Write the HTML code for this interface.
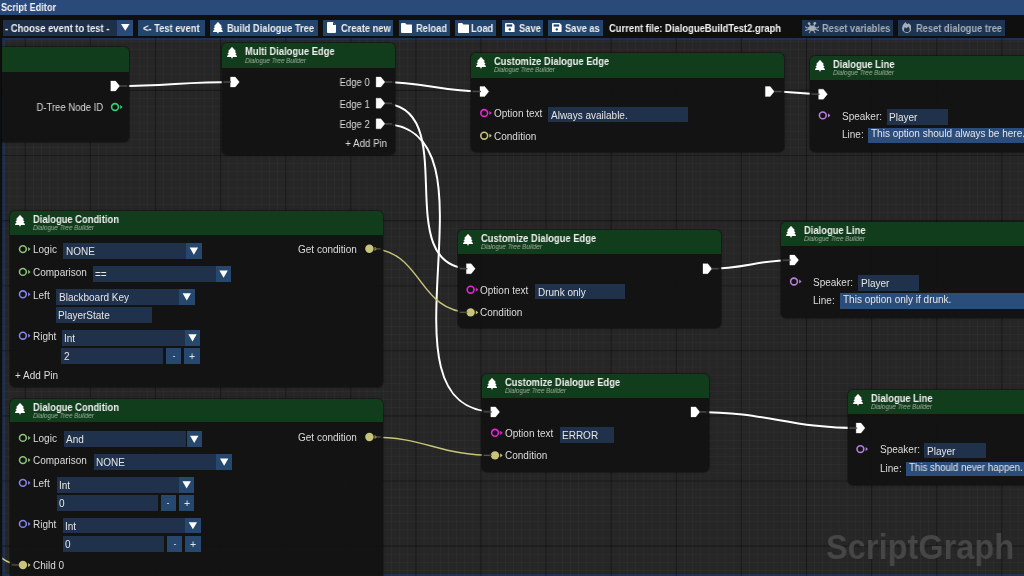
<!DOCTYPE html><html><head><meta charset="utf-8"><style>
html,body{margin:0;padding:0;}
body{width:1024px;height:576px;overflow:hidden;position:relative;background:#0f0f0f;font-family:"Liberation Sans", sans-serif;}
#title{position:absolute;left:0;top:0;width:1024px;height:15px;background:#294a7a;}
#canvas{position:absolute;left:2px;top:38px;width:1022px;height:538px;background-color:#262626;overflow:hidden;}
#border{position:absolute;left:2px;top:38px;width:1022px;height:538px;box-sizing:border-box;border:2.5px solid #233c63;border-right:none;pointer-events:none;}
svg{position:absolute;}
</style></head><body>

<div id="title"></div>
<svg style="left:0;top:0" width="1024" height="576"><defs><clipPath id="cc"><rect x="2.3" y="38" width="1022" height="538"/></clipPath></defs><rect x="2.3" y="38" width="1022" height="538" fill="#1e3150"/><rect x="5" y="40.3" width="1019" height="533.7" fill="#262626"/><g clip-path="url(#cc)"><line x1="-7.25" y1="0" x2="-7.25" y2="576" stroke="rgba(255,255,255,0.028)" stroke-width="1"/><line x1="0.89" y1="0" x2="0.89" y2="576" stroke="rgba(255,255,255,0.028)" stroke-width="1"/><line x1="9.02" y1="0" x2="9.02" y2="576" stroke="rgba(255,255,255,0.028)" stroke-width="1"/><line x1="17.16" y1="0" x2="17.16" y2="576" stroke="rgba(255,255,255,0.028)" stroke-width="1"/><line x1="25.30" y1="0" x2="25.30" y2="576" stroke="rgba(255,255,255,0.028)" stroke-width="1"/><line x1="33.44" y1="0" x2="33.44" y2="576" stroke="rgba(255,255,255,0.028)" stroke-width="1"/><line x1="41.58" y1="0" x2="41.58" y2="576" stroke="rgba(255,255,255,0.028)" stroke-width="1"/><line x1="49.71" y1="0" x2="49.71" y2="576" stroke="rgba(255,255,255,0.028)" stroke-width="1"/><line x1="57.85" y1="0" x2="57.85" y2="576" stroke="rgba(255,255,255,0.028)" stroke-width="1"/><line x1="65.99" y1="0" x2="65.99" y2="576" stroke="rgba(255,255,255,0.028)" stroke-width="1"/><line x1="74.13" y1="0" x2="74.13" y2="576" stroke="rgba(255,255,255,0.028)" stroke-width="1"/><line x1="82.26" y1="0" x2="82.26" y2="576" stroke="rgba(255,255,255,0.028)" stroke-width="1"/><line x1="90.40" y1="0" x2="90.40" y2="576" stroke="rgba(255,255,255,0.028)" stroke-width="1"/><line x1="98.54" y1="0" x2="98.54" y2="576" stroke="rgba(255,255,255,0.028)" stroke-width="1"/><line x1="106.68" y1="0" x2="106.68" y2="576" stroke="rgba(255,255,255,0.028)" stroke-width="1"/><line x1="114.81" y1="0" x2="114.81" y2="576" stroke="rgba(255,255,255,0.028)" stroke-width="1"/><line x1="122.95" y1="0" x2="122.95" y2="576" stroke="rgba(255,255,255,0.028)" stroke-width="1"/><line x1="131.09" y1="0" x2="131.09" y2="576" stroke="rgba(255,255,255,0.028)" stroke-width="1"/><line x1="139.23" y1="0" x2="139.23" y2="576" stroke="rgba(255,255,255,0.028)" stroke-width="1"/><line x1="147.36" y1="0" x2="147.36" y2="576" stroke="rgba(255,255,255,0.028)" stroke-width="1"/><line x1="155.50" y1="0" x2="155.50" y2="576" stroke="rgba(255,255,255,0.028)" stroke-width="1"/><line x1="163.64" y1="0" x2="163.64" y2="576" stroke="rgba(255,255,255,0.028)" stroke-width="1"/><line x1="171.77" y1="0" x2="171.77" y2="576" stroke="rgba(255,255,255,0.028)" stroke-width="1"/><line x1="179.91" y1="0" x2="179.91" y2="576" stroke="rgba(255,255,255,0.028)" stroke-width="1"/><line x1="188.05" y1="0" x2="188.05" y2="576" stroke="rgba(255,255,255,0.028)" stroke-width="1"/><line x1="196.19" y1="0" x2="196.19" y2="576" stroke="rgba(255,255,255,0.028)" stroke-width="1"/><line x1="204.32" y1="0" x2="204.32" y2="576" stroke="rgba(255,255,255,0.028)" stroke-width="1"/><line x1="212.46" y1="0" x2="212.46" y2="576" stroke="rgba(255,255,255,0.028)" stroke-width="1"/><line x1="220.60" y1="0" x2="220.60" y2="576" stroke="rgba(255,255,255,0.028)" stroke-width="1"/><line x1="228.74" y1="0" x2="228.74" y2="576" stroke="rgba(255,255,255,0.028)" stroke-width="1"/><line x1="236.87" y1="0" x2="236.87" y2="576" stroke="rgba(255,255,255,0.028)" stroke-width="1"/><line x1="245.01" y1="0" x2="245.01" y2="576" stroke="rgba(255,255,255,0.028)" stroke-width="1"/><line x1="253.15" y1="0" x2="253.15" y2="576" stroke="rgba(255,255,255,0.028)" stroke-width="1"/><line x1="261.29" y1="0" x2="261.29" y2="576" stroke="rgba(255,255,255,0.028)" stroke-width="1"/><line x1="269.42" y1="0" x2="269.42" y2="576" stroke="rgba(255,255,255,0.028)" stroke-width="1"/><line x1="277.56" y1="0" x2="277.56" y2="576" stroke="rgba(255,255,255,0.028)" stroke-width="1"/><line x1="285.70" y1="0" x2="285.70" y2="576" stroke="rgba(255,255,255,0.028)" stroke-width="1"/><line x1="293.84" y1="0" x2="293.84" y2="576" stroke="rgba(255,255,255,0.028)" stroke-width="1"/><line x1="301.97" y1="0" x2="301.97" y2="576" stroke="rgba(255,255,255,0.028)" stroke-width="1"/><line x1="310.11" y1="0" x2="310.11" y2="576" stroke="rgba(255,255,255,0.028)" stroke-width="1"/><line x1="318.25" y1="0" x2="318.25" y2="576" stroke="rgba(255,255,255,0.028)" stroke-width="1"/><line x1="326.39" y1="0" x2="326.39" y2="576" stroke="rgba(255,255,255,0.028)" stroke-width="1"/><line x1="334.52" y1="0" x2="334.52" y2="576" stroke="rgba(255,255,255,0.028)" stroke-width="1"/><line x1="342.66" y1="0" x2="342.66" y2="576" stroke="rgba(255,255,255,0.028)" stroke-width="1"/><line x1="350.80" y1="0" x2="350.80" y2="576" stroke="rgba(255,255,255,0.028)" stroke-width="1"/><line x1="358.94" y1="0" x2="358.94" y2="576" stroke="rgba(255,255,255,0.028)" stroke-width="1"/><line x1="367.07" y1="0" x2="367.07" y2="576" stroke="rgba(255,255,255,0.028)" stroke-width="1"/><line x1="375.21" y1="0" x2="375.21" y2="576" stroke="rgba(255,255,255,0.028)" stroke-width="1"/><line x1="383.35" y1="0" x2="383.35" y2="576" stroke="rgba(255,255,255,0.028)" stroke-width="1"/><line x1="391.49" y1="0" x2="391.49" y2="576" stroke="rgba(255,255,255,0.028)" stroke-width="1"/><line x1="399.62" y1="0" x2="399.62" y2="576" stroke="rgba(255,255,255,0.028)" stroke-width="1"/><line x1="407.76" y1="0" x2="407.76" y2="576" stroke="rgba(255,255,255,0.028)" stroke-width="1"/><line x1="415.90" y1="0" x2="415.90" y2="576" stroke="rgba(255,255,255,0.028)" stroke-width="1"/><line x1="424.04" y1="0" x2="424.04" y2="576" stroke="rgba(255,255,255,0.028)" stroke-width="1"/><line x1="432.17" y1="0" x2="432.17" y2="576" stroke="rgba(255,255,255,0.028)" stroke-width="1"/><line x1="440.31" y1="0" x2="440.31" y2="576" stroke="rgba(255,255,255,0.028)" stroke-width="1"/><line x1="448.45" y1="0" x2="448.45" y2="576" stroke="rgba(255,255,255,0.028)" stroke-width="1"/><line x1="456.59" y1="0" x2="456.59" y2="576" stroke="rgba(255,255,255,0.028)" stroke-width="1"/><line x1="464.72" y1="0" x2="464.72" y2="576" stroke="rgba(255,255,255,0.028)" stroke-width="1"/><line x1="472.86" y1="0" x2="472.86" y2="576" stroke="rgba(255,255,255,0.028)" stroke-width="1"/><line x1="481.00" y1="0" x2="481.00" y2="576" stroke="rgba(255,255,255,0.028)" stroke-width="1"/><line x1="489.14" y1="0" x2="489.14" y2="576" stroke="rgba(255,255,255,0.028)" stroke-width="1"/><line x1="497.27" y1="0" x2="497.27" y2="576" stroke="rgba(255,255,255,0.028)" stroke-width="1"/><line x1="505.41" y1="0" x2="505.41" y2="576" stroke="rgba(255,255,255,0.028)" stroke-width="1"/><line x1="513.55" y1="0" x2="513.55" y2="576" stroke="rgba(255,255,255,0.028)" stroke-width="1"/><line x1="521.69" y1="0" x2="521.69" y2="576" stroke="rgba(255,255,255,0.028)" stroke-width="1"/><line x1="529.82" y1="0" x2="529.82" y2="576" stroke="rgba(255,255,255,0.028)" stroke-width="1"/><line x1="537.96" y1="0" x2="537.96" y2="576" stroke="rgba(255,255,255,0.028)" stroke-width="1"/><line x1="546.10" y1="0" x2="546.10" y2="576" stroke="rgba(255,255,255,0.028)" stroke-width="1"/><line x1="554.24" y1="0" x2="554.24" y2="576" stroke="rgba(255,255,255,0.028)" stroke-width="1"/><line x1="562.37" y1="0" x2="562.37" y2="576" stroke="rgba(255,255,255,0.028)" stroke-width="1"/><line x1="570.51" y1="0" x2="570.51" y2="576" stroke="rgba(255,255,255,0.028)" stroke-width="1"/><line x1="578.65" y1="0" x2="578.65" y2="576" stroke="rgba(255,255,255,0.028)" stroke-width="1"/><line x1="586.79" y1="0" x2="586.79" y2="576" stroke="rgba(255,255,255,0.028)" stroke-width="1"/><line x1="594.92" y1="0" x2="594.92" y2="576" stroke="rgba(255,255,255,0.028)" stroke-width="1"/><line x1="603.06" y1="0" x2="603.06" y2="576" stroke="rgba(255,255,255,0.028)" stroke-width="1"/><line x1="611.20" y1="0" x2="611.20" y2="576" stroke="rgba(255,255,255,0.028)" stroke-width="1"/><line x1="619.34" y1="0" x2="619.34" y2="576" stroke="rgba(255,255,255,0.028)" stroke-width="1"/><line x1="627.48" y1="0" x2="627.48" y2="576" stroke="rgba(255,255,255,0.028)" stroke-width="1"/><line x1="635.61" y1="0" x2="635.61" y2="576" stroke="rgba(255,255,255,0.028)" stroke-width="1"/><line x1="643.75" y1="0" x2="643.75" y2="576" stroke="rgba(255,255,255,0.028)" stroke-width="1"/><line x1="651.89" y1="0" x2="651.89" y2="576" stroke="rgba(255,255,255,0.028)" stroke-width="1"/><line x1="660.03" y1="0" x2="660.03" y2="576" stroke="rgba(255,255,255,0.028)" stroke-width="1"/><line x1="668.16" y1="0" x2="668.16" y2="576" stroke="rgba(255,255,255,0.028)" stroke-width="1"/><line x1="676.30" y1="0" x2="676.30" y2="576" stroke="rgba(255,255,255,0.028)" stroke-width="1"/><line x1="684.44" y1="0" x2="684.44" y2="576" stroke="rgba(255,255,255,0.028)" stroke-width="1"/><line x1="692.58" y1="0" x2="692.58" y2="576" stroke="rgba(255,255,255,0.028)" stroke-width="1"/><line x1="700.71" y1="0" x2="700.71" y2="576" stroke="rgba(255,255,255,0.028)" stroke-width="1"/><line x1="708.85" y1="0" x2="708.85" y2="576" stroke="rgba(255,255,255,0.028)" stroke-width="1"/><line x1="716.99" y1="0" x2="716.99" y2="576" stroke="rgba(255,255,255,0.028)" stroke-width="1"/><line x1="725.13" y1="0" x2="725.13" y2="576" stroke="rgba(255,255,255,0.028)" stroke-width="1"/><line x1="733.26" y1="0" x2="733.26" y2="576" stroke="rgba(255,255,255,0.028)" stroke-width="1"/><line x1="741.40" y1="0" x2="741.40" y2="576" stroke="rgba(255,255,255,0.028)" stroke-width="1"/><line x1="749.54" y1="0" x2="749.54" y2="576" stroke="rgba(255,255,255,0.028)" stroke-width="1"/><line x1="757.68" y1="0" x2="757.68" y2="576" stroke="rgba(255,255,255,0.028)" stroke-width="1"/><line x1="765.81" y1="0" x2="765.81" y2="576" stroke="rgba(255,255,255,0.028)" stroke-width="1"/><line x1="773.95" y1="0" x2="773.95" y2="576" stroke="rgba(255,255,255,0.028)" stroke-width="1"/><line x1="782.09" y1="0" x2="782.09" y2="576" stroke="rgba(255,255,255,0.028)" stroke-width="1"/><line x1="790.23" y1="0" x2="790.23" y2="576" stroke="rgba(255,255,255,0.028)" stroke-width="1"/><line x1="798.36" y1="0" x2="798.36" y2="576" stroke="rgba(255,255,255,0.028)" stroke-width="1"/><line x1="806.50" y1="0" x2="806.50" y2="576" stroke="rgba(255,255,255,0.028)" stroke-width="1"/><line x1="814.64" y1="0" x2="814.64" y2="576" stroke="rgba(255,255,255,0.028)" stroke-width="1"/><line x1="822.78" y1="0" x2="822.78" y2="576" stroke="rgba(255,255,255,0.028)" stroke-width="1"/><line x1="830.91" y1="0" x2="830.91" y2="576" stroke="rgba(255,255,255,0.028)" stroke-width="1"/><line x1="839.05" y1="0" x2="839.05" y2="576" stroke="rgba(255,255,255,0.028)" stroke-width="1"/><line x1="847.19" y1="0" x2="847.19" y2="576" stroke="rgba(255,255,255,0.028)" stroke-width="1"/><line x1="855.33" y1="0" x2="855.33" y2="576" stroke="rgba(255,255,255,0.028)" stroke-width="1"/><line x1="863.46" y1="0" x2="863.46" y2="576" stroke="rgba(255,255,255,0.028)" stroke-width="1"/><line x1="871.60" y1="0" x2="871.60" y2="576" stroke="rgba(255,255,255,0.028)" stroke-width="1"/><line x1="879.74" y1="0" x2="879.74" y2="576" stroke="rgba(255,255,255,0.028)" stroke-width="1"/><line x1="887.88" y1="0" x2="887.88" y2="576" stroke="rgba(255,255,255,0.028)" stroke-width="1"/><line x1="896.01" y1="0" x2="896.01" y2="576" stroke="rgba(255,255,255,0.028)" stroke-width="1"/><line x1="904.15" y1="0" x2="904.15" y2="576" stroke="rgba(255,255,255,0.028)" stroke-width="1"/><line x1="912.29" y1="0" x2="912.29" y2="576" stroke="rgba(255,255,255,0.028)" stroke-width="1"/><line x1="920.43" y1="0" x2="920.43" y2="576" stroke="rgba(255,255,255,0.028)" stroke-width="1"/><line x1="928.56" y1="0" x2="928.56" y2="576" stroke="rgba(255,255,255,0.028)" stroke-width="1"/><line x1="936.70" y1="0" x2="936.70" y2="576" stroke="rgba(255,255,255,0.028)" stroke-width="1"/><line x1="944.84" y1="0" x2="944.84" y2="576" stroke="rgba(255,255,255,0.028)" stroke-width="1"/><line x1="952.98" y1="0" x2="952.98" y2="576" stroke="rgba(255,255,255,0.028)" stroke-width="1"/><line x1="961.11" y1="0" x2="961.11" y2="576" stroke="rgba(255,255,255,0.028)" stroke-width="1"/><line x1="969.25" y1="0" x2="969.25" y2="576" stroke="rgba(255,255,255,0.028)" stroke-width="1"/><line x1="977.39" y1="0" x2="977.39" y2="576" stroke="rgba(255,255,255,0.028)" stroke-width="1"/><line x1="985.53" y1="0" x2="985.53" y2="576" stroke="rgba(255,255,255,0.028)" stroke-width="1"/><line x1="993.66" y1="0" x2="993.66" y2="576" stroke="rgba(255,255,255,0.028)" stroke-width="1"/><line x1="1001.80" y1="0" x2="1001.80" y2="576" stroke="rgba(255,255,255,0.028)" stroke-width="1"/><line x1="1009.94" y1="0" x2="1009.94" y2="576" stroke="rgba(255,255,255,0.028)" stroke-width="1"/><line x1="1018.08" y1="0" x2="1018.08" y2="576" stroke="rgba(255,255,255,0.028)" stroke-width="1"/><line x1="0" y1="-7.25" x2="1024" y2="-7.25" stroke="rgba(255,255,255,0.028)" stroke-width="1"/><line x1="0" y1="0.89" x2="1024" y2="0.89" stroke="rgba(255,255,255,0.028)" stroke-width="1"/><line x1="0" y1="9.02" x2="1024" y2="9.02" stroke="rgba(255,255,255,0.028)" stroke-width="1"/><line x1="0" y1="17.16" x2="1024" y2="17.16" stroke="rgba(255,255,255,0.028)" stroke-width="1"/><line x1="0" y1="25.30" x2="1024" y2="25.30" stroke="rgba(255,255,255,0.028)" stroke-width="1"/><line x1="0" y1="33.44" x2="1024" y2="33.44" stroke="rgba(255,255,255,0.028)" stroke-width="1"/><line x1="0" y1="41.58" x2="1024" y2="41.58" stroke="rgba(255,255,255,0.028)" stroke-width="1"/><line x1="0" y1="49.71" x2="1024" y2="49.71" stroke="rgba(255,255,255,0.028)" stroke-width="1"/><line x1="0" y1="57.85" x2="1024" y2="57.85" stroke="rgba(255,255,255,0.028)" stroke-width="1"/><line x1="0" y1="65.99" x2="1024" y2="65.99" stroke="rgba(255,255,255,0.028)" stroke-width="1"/><line x1="0" y1="74.13" x2="1024" y2="74.13" stroke="rgba(255,255,255,0.028)" stroke-width="1"/><line x1="0" y1="82.26" x2="1024" y2="82.26" stroke="rgba(255,255,255,0.028)" stroke-width="1"/><line x1="0" y1="90.40" x2="1024" y2="90.40" stroke="rgba(255,255,255,0.028)" stroke-width="1"/><line x1="0" y1="98.54" x2="1024" y2="98.54" stroke="rgba(255,255,255,0.028)" stroke-width="1"/><line x1="0" y1="106.68" x2="1024" y2="106.68" stroke="rgba(255,255,255,0.028)" stroke-width="1"/><line x1="0" y1="114.81" x2="1024" y2="114.81" stroke="rgba(255,255,255,0.028)" stroke-width="1"/><line x1="0" y1="122.95" x2="1024" y2="122.95" stroke="rgba(255,255,255,0.028)" stroke-width="1"/><line x1="0" y1="131.09" x2="1024" y2="131.09" stroke="rgba(255,255,255,0.028)" stroke-width="1"/><line x1="0" y1="139.23" x2="1024" y2="139.23" stroke="rgba(255,255,255,0.028)" stroke-width="1"/><line x1="0" y1="147.36" x2="1024" y2="147.36" stroke="rgba(255,255,255,0.028)" stroke-width="1"/><line x1="0" y1="155.50" x2="1024" y2="155.50" stroke="rgba(255,255,255,0.028)" stroke-width="1"/><line x1="0" y1="163.64" x2="1024" y2="163.64" stroke="rgba(255,255,255,0.028)" stroke-width="1"/><line x1="0" y1="171.77" x2="1024" y2="171.77" stroke="rgba(255,255,255,0.028)" stroke-width="1"/><line x1="0" y1="179.91" x2="1024" y2="179.91" stroke="rgba(255,255,255,0.028)" stroke-width="1"/><line x1="0" y1="188.05" x2="1024" y2="188.05" stroke="rgba(255,255,255,0.028)" stroke-width="1"/><line x1="0" y1="196.19" x2="1024" y2="196.19" stroke="rgba(255,255,255,0.028)" stroke-width="1"/><line x1="0" y1="204.32" x2="1024" y2="204.32" stroke="rgba(255,255,255,0.028)" stroke-width="1"/><line x1="0" y1="212.46" x2="1024" y2="212.46" stroke="rgba(255,255,255,0.028)" stroke-width="1"/><line x1="0" y1="220.60" x2="1024" y2="220.60" stroke="rgba(255,255,255,0.028)" stroke-width="1"/><line x1="0" y1="228.74" x2="1024" y2="228.74" stroke="rgba(255,255,255,0.028)" stroke-width="1"/><line x1="0" y1="236.87" x2="1024" y2="236.87" stroke="rgba(255,255,255,0.028)" stroke-width="1"/><line x1="0" y1="245.01" x2="1024" y2="245.01" stroke="rgba(255,255,255,0.028)" stroke-width="1"/><line x1="0" y1="253.15" x2="1024" y2="253.15" stroke="rgba(255,255,255,0.028)" stroke-width="1"/><line x1="0" y1="261.29" x2="1024" y2="261.29" stroke="rgba(255,255,255,0.028)" stroke-width="1"/><line x1="0" y1="269.42" x2="1024" y2="269.42" stroke="rgba(255,255,255,0.028)" stroke-width="1"/><line x1="0" y1="277.56" x2="1024" y2="277.56" stroke="rgba(255,255,255,0.028)" stroke-width="1"/><line x1="0" y1="285.70" x2="1024" y2="285.70" stroke="rgba(255,255,255,0.028)" stroke-width="1"/><line x1="0" y1="293.84" x2="1024" y2="293.84" stroke="rgba(255,255,255,0.028)" stroke-width="1"/><line x1="0" y1="301.97" x2="1024" y2="301.97" stroke="rgba(255,255,255,0.028)" stroke-width="1"/><line x1="0" y1="310.11" x2="1024" y2="310.11" stroke="rgba(255,255,255,0.028)" stroke-width="1"/><line x1="0" y1="318.25" x2="1024" y2="318.25" stroke="rgba(255,255,255,0.028)" stroke-width="1"/><line x1="0" y1="326.39" x2="1024" y2="326.39" stroke="rgba(255,255,255,0.028)" stroke-width="1"/><line x1="0" y1="334.52" x2="1024" y2="334.52" stroke="rgba(255,255,255,0.028)" stroke-width="1"/><line x1="0" y1="342.66" x2="1024" y2="342.66" stroke="rgba(255,255,255,0.028)" stroke-width="1"/><line x1="0" y1="350.80" x2="1024" y2="350.80" stroke="rgba(255,255,255,0.028)" stroke-width="1"/><line x1="0" y1="358.94" x2="1024" y2="358.94" stroke="rgba(255,255,255,0.028)" stroke-width="1"/><line x1="0" y1="367.07" x2="1024" y2="367.07" stroke="rgba(255,255,255,0.028)" stroke-width="1"/><line x1="0" y1="375.21" x2="1024" y2="375.21" stroke="rgba(255,255,255,0.028)" stroke-width="1"/><line x1="0" y1="383.35" x2="1024" y2="383.35" stroke="rgba(255,255,255,0.028)" stroke-width="1"/><line x1="0" y1="391.49" x2="1024" y2="391.49" stroke="rgba(255,255,255,0.028)" stroke-width="1"/><line x1="0" y1="399.62" x2="1024" y2="399.62" stroke="rgba(255,255,255,0.028)" stroke-width="1"/><line x1="0" y1="407.76" x2="1024" y2="407.76" stroke="rgba(255,255,255,0.028)" stroke-width="1"/><line x1="0" y1="415.90" x2="1024" y2="415.90" stroke="rgba(255,255,255,0.028)" stroke-width="1"/><line x1="0" y1="424.04" x2="1024" y2="424.04" stroke="rgba(255,255,255,0.028)" stroke-width="1"/><line x1="0" y1="432.17" x2="1024" y2="432.17" stroke="rgba(255,255,255,0.028)" stroke-width="1"/><line x1="0" y1="440.31" x2="1024" y2="440.31" stroke="rgba(255,255,255,0.028)" stroke-width="1"/><line x1="0" y1="448.45" x2="1024" y2="448.45" stroke="rgba(255,255,255,0.028)" stroke-width="1"/><line x1="0" y1="456.59" x2="1024" y2="456.59" stroke="rgba(255,255,255,0.028)" stroke-width="1"/><line x1="0" y1="464.72" x2="1024" y2="464.72" stroke="rgba(255,255,255,0.028)" stroke-width="1"/><line x1="0" y1="472.86" x2="1024" y2="472.86" stroke="rgba(255,255,255,0.028)" stroke-width="1"/><line x1="0" y1="481.00" x2="1024" y2="481.00" stroke="rgba(255,255,255,0.028)" stroke-width="1"/><line x1="0" y1="489.14" x2="1024" y2="489.14" stroke="rgba(255,255,255,0.028)" stroke-width="1"/><line x1="0" y1="497.27" x2="1024" y2="497.27" stroke="rgba(255,255,255,0.028)" stroke-width="1"/><line x1="0" y1="505.41" x2="1024" y2="505.41" stroke="rgba(255,255,255,0.028)" stroke-width="1"/><line x1="0" y1="513.55" x2="1024" y2="513.55" stroke="rgba(255,255,255,0.028)" stroke-width="1"/><line x1="0" y1="521.69" x2="1024" y2="521.69" stroke="rgba(255,255,255,0.028)" stroke-width="1"/><line x1="0" y1="529.82" x2="1024" y2="529.82" stroke="rgba(255,255,255,0.028)" stroke-width="1"/><line x1="0" y1="537.96" x2="1024" y2="537.96" stroke="rgba(255,255,255,0.028)" stroke-width="1"/><line x1="0" y1="546.10" x2="1024" y2="546.10" stroke="rgba(255,255,255,0.028)" stroke-width="1"/><line x1="0" y1="554.24" x2="1024" y2="554.24" stroke="rgba(255,255,255,0.028)" stroke-width="1"/><line x1="0" y1="562.37" x2="1024" y2="562.37" stroke="rgba(255,255,255,0.028)" stroke-width="1"/><line x1="0" y1="570.51" x2="1024" y2="570.51" stroke="rgba(255,255,255,0.028)" stroke-width="1"/><line x1="-39.80" y1="0" x2="-39.80" y2="576" stroke="rgba(0,0,0,0.38)" stroke-width="1.1"/><line x1="25.30" y1="0" x2="25.30" y2="576" stroke="rgba(0,0,0,0.38)" stroke-width="1.1"/><line x1="90.40" y1="0" x2="90.40" y2="576" stroke="rgba(0,0,0,0.38)" stroke-width="1.1"/><line x1="155.50" y1="0" x2="155.50" y2="576" stroke="rgba(0,0,0,0.38)" stroke-width="1.1"/><line x1="220.60" y1="0" x2="220.60" y2="576" stroke="rgba(0,0,0,0.38)" stroke-width="1.1"/><line x1="285.70" y1="0" x2="285.70" y2="576" stroke="rgba(0,0,0,0.38)" stroke-width="1.1"/><line x1="350.80" y1="0" x2="350.80" y2="576" stroke="rgba(0,0,0,0.38)" stroke-width="1.1"/><line x1="415.90" y1="0" x2="415.90" y2="576" stroke="rgba(0,0,0,0.38)" stroke-width="1.1"/><line x1="481.00" y1="0" x2="481.00" y2="576" stroke="rgba(0,0,0,0.38)" stroke-width="1.1"/><line x1="546.10" y1="0" x2="546.10" y2="576" stroke="rgba(0,0,0,0.38)" stroke-width="1.1"/><line x1="611.20" y1="0" x2="611.20" y2="576" stroke="rgba(0,0,0,0.38)" stroke-width="1.1"/><line x1="676.30" y1="0" x2="676.30" y2="576" stroke="rgba(0,0,0,0.38)" stroke-width="1.1"/><line x1="741.40" y1="0" x2="741.40" y2="576" stroke="rgba(0,0,0,0.38)" stroke-width="1.1"/><line x1="806.50" y1="0" x2="806.50" y2="576" stroke="rgba(0,0,0,0.38)" stroke-width="1.1"/><line x1="871.60" y1="0" x2="871.60" y2="576" stroke="rgba(0,0,0,0.38)" stroke-width="1.1"/><line x1="936.70" y1="0" x2="936.70" y2="576" stroke="rgba(0,0,0,0.38)" stroke-width="1.1"/><line x1="1001.80" y1="0" x2="1001.80" y2="576" stroke="rgba(0,0,0,0.38)" stroke-width="1.1"/><line x1="0" y1="-39.80" x2="1024" y2="-39.80" stroke="rgba(0,0,0,0.38)" stroke-width="1.1"/><line x1="0" y1="25.30" x2="1024" y2="25.30" stroke="rgba(0,0,0,0.38)" stroke-width="1.1"/><line x1="0" y1="90.40" x2="1024" y2="90.40" stroke="rgba(0,0,0,0.38)" stroke-width="1.1"/><line x1="0" y1="155.50" x2="1024" y2="155.50" stroke="rgba(0,0,0,0.38)" stroke-width="1.1"/><line x1="0" y1="220.60" x2="1024" y2="220.60" stroke="rgba(0,0,0,0.38)" stroke-width="1.1"/><line x1="0" y1="285.70" x2="1024" y2="285.70" stroke="rgba(0,0,0,0.38)" stroke-width="1.1"/><line x1="0" y1="350.80" x2="1024" y2="350.80" stroke="rgba(0,0,0,0.38)" stroke-width="1.1"/><line x1="0" y1="415.90" x2="1024" y2="415.90" stroke="rgba(0,0,0,0.38)" stroke-width="1.1"/><line x1="0" y1="481.00" x2="1024" y2="481.00" stroke="rgba(0,0,0,0.38)" stroke-width="1.1"/><line x1="0" y1="546.10" x2="1024" y2="546.10" stroke="rgba(0,0,0,0.38)" stroke-width="1.1"/></g></svg>
<svg style="left:0;top:0" width="1024" height="576"><defs><clipPath id="wc"><rect x="2.3" y="38" width="1022" height="538"/></clipPath></defs><g clip-path="url(#wc)"><path d="M115.20 86.00 C169.19 86.00 181.11 82.00 235.10 82.00" fill="none" stroke="#ffffff" stroke-width="2.00"/><path d="M380.80 82.00 C427.71 82.00 437.69 91.50 484.60 91.50" fill="none" stroke="#ffffff" stroke-width="2.00"/><path d="M380.80 103.20 C465.80 103.20 386.20 268.70 471.20 268.70" fill="none" stroke="#ffffff" stroke-width="2.00"/><path d="M380.80 123.80 C510.80 123.80 365.30 411.90 495.30 411.90" fill="none" stroke="#ffffff" stroke-width="2.00"/><path d="M770.00 91.50 C793.97 91.50 799.23 94.20 823.20 94.20" fill="none" stroke="#ffffff" stroke-width="2.00"/><path d="M707.50 268.70 C746.84 268.70 755.16 260.10 794.50 260.10" fill="none" stroke="#ffffff" stroke-width="2.00"/><path d="M695.50 411.90 C770.20 411.90 786.00 428.10 860.70 428.10" fill="none" stroke="#ffffff" stroke-width="2.00"/><path d="M369.40 248.80 C423.19 248.80 416.81 312.40 470.60 312.40" fill="none" stroke="#c8c47a" stroke-width="1.50"/><path d="M369.40 437.00 C426.52 437.00 437.88 455.40 495.00 455.40" fill="none" stroke="#c8c47a" stroke-width="1.50"/><path d="M-50.00 512.00 C-9.41 512.00 -17.59 565.00 23.00 565.00" fill="none" stroke="#c8c47a" stroke-width="1.50"/></g></svg>
<div style="position:absolute;top:8.00px;line-height:0;white-space:pre;font-size:10.20px;color:#f2f2f2;will-change:transform;font-weight:bold;left:1.00px;transform:scaleX(0.900);transform-origin:0 0;">Script Editor</div><div style="position:absolute;left:3.00px;top:20.00px;width:114.00px;height:16.00px;background:#1d2f49;border-radius:0px;"></div><div style="position:absolute;left:117.00px;top:20.00px;width:16.00px;height:16.00px;background:#294a7a;border-radius:0px;"></div><div style="position:absolute;top:29.00px;line-height:0;white-space:pre;font-size:10.20px;color:#eeeeee;will-change:transform;font-weight:bold;left:5.30px;transform:scaleX(0.927);transform-origin:0 0;">- Choose event to test -</div><svg style="position:absolute;left:120.5px;top:24.2px" width="9" height="7" viewBox="0 0 9 7"><path d="M0 0 L8.6 0 L4.3 6.7 Z" fill="#ffffff"/></svg><div style="position:absolute;left:137.80px;top:20.00px;width:67.00px;height:16.00px;background:#23456d;border-radius:0px;"></div><div style="position:absolute;top:29.00px;line-height:0;white-space:pre;font-size:10.20px;color:#eeeeee;will-change:transform;font-weight:bold;left:142.70px;transform:scaleX(0.915);transform-origin:0 0;">&lt;- Test event</div><div style="position:absolute;left:210.00px;top:20.00px;width:108.00px;height:16.00px;background:#23456d;border-radius:0px;"></div><div style="position:absolute;top:29.00px;line-height:0;white-space:pre;font-size:10.20px;color:#eeeeee;will-change:transform;font-weight:bold;left:227.30px;transform:scaleX(0.915);transform-origin:0 0;">Build Dialogue Tree</div><svg style="position:absolute;left:213.30px;top:21.80px;overflow:visible" width="9.9" height="11.4" viewBox="0 0 448 512"><path d="M210.6 5.9L62 169.4c-3.9 4.2-6 9.8-6 15.5C56 197.7 66.3 208 79.1 208H104L30.6 281.4c-4.2 4.2-6.6 10-6.6 16C24 309.9 34.1 320 46.6 320H80L5.4 409.5C1.9 413.7 0 419 0 424.5c0 13 10.5 23.5 23.5 23.5H192v32c0 17.7 14.3 32 32 32s32-14.3 32-32V448H424.5c13 0 23.5-10.5 23.5-23.5c0-5.5-1.9-10.8-5.4-15L368 320h33.4c12.5 0 22.6-10.1 22.6-22.6c0-6-2.4-11.8-6.6-16L344 208h24.9c12.7 0 23.1-10.3 23.1-23.1c0-5.7-2.1-11.3-6-15.5L237.4 5.9C234 2.1 229.1 0 224 0s-10 2.1-13.4 5.9z" fill="#ffffff"/></svg><div style="position:absolute;left:323.20px;top:20.00px;width:70.30px;height:16.00px;background:#23456d;border-radius:0px;"></div><div style="position:absolute;top:29.00px;line-height:0;white-space:pre;font-size:10.20px;color:#eeeeee;will-change:transform;font-weight:bold;left:340.50px;transform:scaleX(0.915);transform-origin:0 0;">Create new</div><svg style="position:absolute;left:327px;top:22.1px" width="9" height="11" viewBox="0 0 9 11"><path d="M1 0 L6 0 L9 3 L9 10 Q9 11 8 11 L1 11 Q0 11 0 10 L0 1 Q0 0 1 0 Z" fill="#ffffff"/><path d="M6 0 L6 3 L9 3" fill="#23456d"/></svg><div style="position:absolute;left:399.00px;top:20.00px;width:50.80px;height:16.00px;background:#23456d;border-radius:0px;"></div><div style="position:absolute;top:29.00px;line-height:0;white-space:pre;font-size:10.20px;color:#eeeeee;will-change:transform;font-weight:bold;left:415.90px;transform:scaleX(0.915);transform-origin:0 0;">Reload</div><svg style="position:absolute;left:401.2px;top:22.7px" width="11.2" height="10" viewBox="0 0 11.2 10"><path d="M1 0 L4.2 0 L5.4 1.4 L10.2 1.4 Q11.2 1.4 11.2 2.4 L11.2 9 Q11.2 10 10.2 10 L1 10 Q0 10 0 9 L0 1 Q0 0 1 0 Z" fill="#ffffff"/></svg><div style="position:absolute;left:454.80px;top:20.00px;width:41.40px;height:16.00px;background:#23456d;border-radius:0px;"></div><div style="position:absolute;top:29.00px;line-height:0;white-space:pre;font-size:10.20px;color:#eeeeee;will-change:transform;font-weight:bold;left:471.20px;transform:scaleX(0.915);transform-origin:0 0;">Load</div><svg style="position:absolute;left:457.5px;top:22.7px" width="11.2" height="10" viewBox="0 0 11.2 10"><path d="M1 0 L4.2 0 L5.4 1.4 L10.2 1.4 Q11.2 1.4 11.2 2.4 L11.2 9 Q11.2 10 10.2 10 L1 10 Q0 10 0 9 L0 1 Q0 0 1 0 Z" fill="#ffffff"/></svg><div style="position:absolute;left:501.50px;top:20.00px;width:41.50px;height:16.00px;background:#23456d;border-radius:0px;"></div><div style="position:absolute;top:29.00px;line-height:0;white-space:pre;font-size:10.20px;color:#eeeeee;will-change:transform;font-weight:bold;left:518.70px;transform:scaleX(0.915);transform-origin:0 0;">Save</div><svg style="position:absolute;left:505px;top:23px" width="9.6" height="9.4" viewBox="0 0 9.6 9.4"><path d="M1 0 L7.6 0 L9.6 2 L9.6 8.4 Q9.6 9.4 8.6 9.4 L1 9.4 Q0 9.4 0 8.4 L0 1 Q0 0 1 0 Z" fill="#ffffff"/><rect x="1.6" y="1.4" width="5.6" height="2.2" fill="#23456d"/><circle cx="4.8" cy="6.4" r="1.2" fill="#23456d"/></svg><div style="position:absolute;left:548.30px;top:20.00px;width:54.50px;height:16.00px;background:#23456d;border-radius:0px;"></div><div style="position:absolute;top:29.00px;line-height:0;white-space:pre;font-size:10.20px;color:#eeeeee;will-change:transform;font-weight:bold;left:565.30px;transform:scaleX(0.915);transform-origin:0 0;">Save as</div><svg style="position:absolute;left:552px;top:23px" width="9.6" height="9.4" viewBox="0 0 9.6 9.4"><path d="M1 0 L7.6 0 L9.6 2 L9.6 8.4 Q9.6 9.4 8.6 9.4 L1 9.4 Q0 9.4 0 8.4 L0 1 Q0 0 1 0 Z" fill="#ffffff"/><rect x="1.6" y="1.4" width="5.6" height="2.2" fill="#23456d"/><circle cx="4.8" cy="6.4" r="1.2" fill="#23456d"/></svg><div style="position:absolute;top:29.00px;line-height:0;white-space:pre;font-size:10.20px;color:#f2f2f2;will-change:transform;font-weight:bold;left:608.50px;transform:scaleX(0.925);transform-origin:0 0;">Current file: DialogueBuildTest2.graph</div><div style="position:absolute;left:802.20px;top:20.00px;width:90.80px;height:16.00px;background:#1d3352;border-radius:0px;"></div><div style="position:absolute;top:29.00px;line-height:0;white-space:pre;font-size:10.20px;color:#a6aeb8;will-change:transform;font-weight:bold;left:822.00px;transform:scaleX(0.915);transform-origin:0 0;">Reset variables</div><svg style="position:absolute;left:804.7px;top:21.8px;overflow:visible" width="14" height="11.4" viewBox="0 0 14 11.4"><g fill="#a6aeb8"><ellipse cx="7.1" cy="6.3" rx="3.7" ry="2.7"/><circle cx="4.1" cy="1.5" r="1.35"/><circle cx="9.8" cy="1.3" r="1.35"/></g><g fill="none" stroke="#a6aeb8" stroke-width="1.1" stroke-linecap="round"><path d="M5.4 4.3 L4.1 1.6 M8.8 4.3 L9.8 1.4 M3.8 5.8 Q1.8 6.4 0.5 4.9 M3.8 7.2 Q1.8 8.2 0.6 8.4 M10.4 5.8 Q12.4 6.4 13.6 4.9 M10.4 7.2 Q12.4 8.2 13.5 8.4 M5.6 8.6 L4.3 10.8 M8.6 8.6 L9.9 10.8"/></g></svg><div style="position:absolute;left:898.40px;top:20.00px;width:106.30px;height:16.00px;background:#1d3352;border-radius:0px;"></div><div style="position:absolute;top:29.00px;line-height:0;white-space:pre;font-size:10.20px;color:#a6aeb8;will-change:transform;font-weight:bold;left:915.80px;transform:scaleX(0.915);transform-origin:0 0;">Reset dialogue tree</div><svg style="position:absolute;left:901.7px;top:22.1px" width="9.7" height="10.9" viewBox="0 0 9.7 10.9"><path d="M3.5 0 L5.2 2.2 L6.8 1.2 Q9.7 3.8 9.7 6.2 A4.85 4.7 0 0 1 0 6.2 Q0 3 3.5 0 Z" fill="#a6aeb8"/><path d="M3 4.9 L4.5 6.6 L6.4 4.4 Q7.7 5.9 7.7 7.5 A2.85 2.6 0 0 1 2 7.5 Q2 6.1 3 4.9 Z" fill="#1d3352"/></svg><div style="position:absolute;left:2.30px;top:46.80px;width:126.70px;height:95.40px;border-radius:0 5px 5px 0;background:rgba(18,18,18,0.94);overflow:hidden;box-shadow:0 0 0 0.8px rgba(0,0,0,0.3),0 0 3px rgba(0,0,0,0.3)"><div style="position:absolute;left:0;top:0;right:0;height:25.00px;background:#123d1c"></div></div><div style="position:absolute;top:108.00px;line-height:0;white-space:pre;font-size:10.00px;color:#dcdcdc;will-change:transform;right:921.00px;transform:scaleX(0.950);transform-origin:100% 0;">D-Tree Node ID</div><div style="position:absolute;left:221.60px;top:43.30px;width:173.20px;height:111.50px;border-radius:5px;background:rgba(18,18,18,0.94);overflow:hidden;box-shadow:0 0 0 0.8px rgba(0,0,0,0.3),0 0 3px rgba(0,0,0,0.3)"><div style="position:absolute;left:0;top:0;right:0;height:24.40px;background:#123d1c"></div></div><svg style="position:absolute;left:227.00px;top:47.40px;overflow:visible" width="10" height="11.4" viewBox="0 0 448 512"><path d="M210.6 5.9L62 169.4c-3.9 4.2-6 9.8-6 15.5C56 197.7 66.3 208 79.1 208H104L30.6 281.4c-4.2 4.2-6.6 10-6.6 16C24 309.9 34.1 320 46.6 320H80L5.4 409.5C1.9 413.7 0 419 0 424.5c0 13 10.5 23.5 23.5 23.5H192v32c0 17.7 14.3 32 32 32s32-14.3 32-32V448H424.5c13 0 23.5-10.5 23.5-23.5c0-5.5-1.9-10.8-5.4-15L368 320h33.4c12.5 0 22.6-10.1 22.6-22.6c0-6-2.4-11.8-6.6-16L344 208h24.9c12.7 0 23.1-10.3 23.1-23.1c0-5.7-2.1-11.3-6-15.5L237.4 5.9C234 2.1 229.1 0 224 0s-10 2.1-13.4 5.9z" fill="#ffffff"/></svg><div style="position:absolute;top:52.00px;line-height:0;white-space:pre;font-size:10.20px;color:#f0f0f0;will-change:transform;font-weight:bold;left:244.60px;transform:scaleX(0.920);transform-origin:0 0;">Multi Dialogue Edge</div><div style="position:absolute;top:61.00px;line-height:0;white-space:pre;font-size:6.90px;color:#a0afa2;will-change:transform;font-style:italic;left:244.60px;transform:scaleX(0.920);transform-origin:0 0;">Dialogue Tree Builder</div><div style="position:absolute;top:83.00px;line-height:0;white-space:pre;font-size:10.00px;color:#dcdcdc;will-change:transform;right:654.80px;transform:scaleX(0.950);transform-origin:100% 0;">Edge 0</div><div style="position:absolute;top:105.00px;line-height:0;white-space:pre;font-size:10.00px;color:#dcdcdc;will-change:transform;right:654.80px;transform:scaleX(0.950);transform-origin:100% 0;">Edge 1</div><div style="position:absolute;top:125.00px;line-height:0;white-space:pre;font-size:10.00px;color:#dcdcdc;will-change:transform;right:654.80px;transform:scaleX(0.950);transform-origin:100% 0;">Edge 2</div><div style="position:absolute;top:144.00px;line-height:0;white-space:pre;font-size:10.00px;color:#dcdcdc;will-change:transform;right:636.60px;transform:scaleX(0.970);transform-origin:100% 0;">+ Add Pin</div><div style="position:absolute;left:470.60px;top:52.80px;width:313.60px;height:98.80px;border-radius:5px;background:rgba(18,18,18,0.94);overflow:hidden;box-shadow:0 0 0 0.8px rgba(0,0,0,0.3),0 0 3px rgba(0,0,0,0.3)"><div style="position:absolute;left:0;top:0;right:0;height:24.80px;background:#123d1c"></div></div><svg style="position:absolute;left:476.00px;top:56.90px;overflow:visible" width="10" height="11.4" viewBox="0 0 448 512"><path d="M210.6 5.9L62 169.4c-3.9 4.2-6 9.8-6 15.5C56 197.7 66.3 208 79.1 208H104L30.6 281.4c-4.2 4.2-6.6 10-6.6 16C24 309.9 34.1 320 46.6 320H80L5.4 409.5C1.9 413.7 0 419 0 424.5c0 13 10.5 23.5 23.5 23.5H192v32c0 17.7 14.3 32 32 32s32-14.3 32-32V448H424.5c13 0 23.5-10.5 23.5-23.5c0-5.5-1.9-10.8-5.4-15L368 320h33.4c12.5 0 22.6-10.1 22.6-22.6c0-6-2.4-11.8-6.6-16L344 208h24.9c12.7 0 23.1-10.3 23.1-23.1c0-5.7-2.1-11.3-6-15.5L237.4 5.9C234 2.1 229.1 0 224 0s-10 2.1-13.4 5.9z" fill="#ffffff"/></svg><div style="position:absolute;top:62.00px;line-height:0;white-space:pre;font-size:10.20px;color:#f0f0f0;will-change:transform;font-weight:bold;left:493.60px;transform:scaleX(0.920);transform-origin:0 0;">Customize Dialogue Edge</div><div style="position:absolute;top:70.00px;line-height:0;white-space:pre;font-size:6.90px;color:#a0afa2;will-change:transform;font-style:italic;left:493.60px;transform:scaleX(0.920);transform-origin:0 0;">Dialogue Tree Builder</div><div style="position:absolute;top:114.00px;line-height:0;white-space:pre;font-size:10.00px;color:#dcdcdc;will-change:transform;left:494.00px;">Option text</div><div style="position:absolute;left:548.30px;top:106.80px;width:139.80px;height:15.20px;background:#1f314b;border-radius:0px;"></div><div style="position:absolute;top:116.00px;line-height:0;white-space:pre;font-size:10.00px;color:#e6e6e6;will-change:transform;left:550.80px;">Always available.</div><div style="position:absolute;top:137.00px;line-height:0;white-space:pre;font-size:10.00px;color:#dcdcdc;will-change:transform;left:494.00px;">Condition</div><div style="position:absolute;left:457.70px;top:229.80px;width:263.30px;height:98.50px;border-radius:5px;background:rgba(18,18,18,0.94);overflow:hidden;box-shadow:0 0 0 0.8px rgba(0,0,0,0.3),0 0 3px rgba(0,0,0,0.3)"><div style="position:absolute;left:0;top:0;right:0;height:24.40px;background:#123d1c"></div></div><svg style="position:absolute;left:463.10px;top:233.90px;overflow:visible" width="10" height="11.4" viewBox="0 0 448 512"><path d="M210.6 5.9L62 169.4c-3.9 4.2-6 9.8-6 15.5C56 197.7 66.3 208 79.1 208H104L30.6 281.4c-4.2 4.2-6.6 10-6.6 16C24 309.9 34.1 320 46.6 320H80L5.4 409.5C1.9 413.7 0 419 0 424.5c0 13 10.5 23.5 23.5 23.5H192v32c0 17.7 14.3 32 32 32s32-14.3 32-32V448H424.5c13 0 23.5-10.5 23.5-23.5c0-5.5-1.9-10.8-5.4-15L368 320h33.4c12.5 0 22.6-10.1 22.6-22.6c0-6-2.4-11.8-6.6-16L344 208h24.9c12.7 0 23.1-10.3 23.1-23.1c0-5.7-2.1-11.3-6-15.5L237.4 5.9C234 2.1 229.1 0 224 0s-10 2.1-13.4 5.9z" fill="#ffffff"/></svg><div style="position:absolute;top:239.00px;line-height:0;white-space:pre;font-size:10.20px;color:#f0f0f0;will-change:transform;font-weight:bold;left:480.70px;transform:scaleX(0.920);transform-origin:0 0;">Customize Dialogue Edge</div><div style="position:absolute;top:247.00px;line-height:0;white-space:pre;font-size:6.90px;color:#a0afa2;will-change:transform;font-style:italic;left:480.70px;transform:scaleX(0.920);transform-origin:0 0;">Dialogue Tree Builder</div><div style="position:absolute;top:291.00px;line-height:0;white-space:pre;font-size:10.00px;color:#dcdcdc;will-change:transform;left:480.40px;">Option text</div><div style="position:absolute;left:535.30px;top:284.00px;width:89.70px;height:15.30px;background:#1f314b;border-radius:0px;"></div><div style="position:absolute;top:293.00px;line-height:0;white-space:pre;font-size:10.00px;color:#e6e6e6;will-change:transform;left:537.80px;">Drunk only</div><div style="position:absolute;top:313.00px;line-height:0;white-space:pre;font-size:10.00px;color:#dcdcdc;will-change:transform;left:480.40px;">Condition</div><div style="position:absolute;left:481.70px;top:373.50px;width:227.60px;height:98.50px;border-radius:5px;background:rgba(18,18,18,0.94);overflow:hidden;box-shadow:0 0 0 0.8px rgba(0,0,0,0.3),0 0 3px rgba(0,0,0,0.3)"><div style="position:absolute;left:0;top:0;right:0;height:24.00px;background:#123d1c"></div></div><svg style="position:absolute;left:487.10px;top:377.60px;overflow:visible" width="10" height="11.4" viewBox="0 0 448 512"><path d="M210.6 5.9L62 169.4c-3.9 4.2-6 9.8-6 15.5C56 197.7 66.3 208 79.1 208H104L30.6 281.4c-4.2 4.2-6.6 10-6.6 16C24 309.9 34.1 320 46.6 320H80L5.4 409.5C1.9 413.7 0 419 0 424.5c0 13 10.5 23.5 23.5 23.5H192v32c0 17.7 14.3 32 32 32s32-14.3 32-32V448H424.5c13 0 23.5-10.5 23.5-23.5c0-5.5-1.9-10.8-5.4-15L368 320h33.4c12.5 0 22.6-10.1 22.6-22.6c0-6-2.4-11.8-6.6-16L344 208h24.9c12.7 0 23.1-10.3 23.1-23.1c0-5.7-2.1-11.3-6-15.5L237.4 5.9C234 2.1 229.1 0 224 0s-10 2.1-13.4 5.9z" fill="#ffffff"/></svg><div style="position:absolute;top:383.00px;line-height:0;white-space:pre;font-size:10.20px;color:#f0f0f0;will-change:transform;font-weight:bold;left:504.70px;transform:scaleX(0.920);transform-origin:0 0;">Customize Dialogue Edge</div><div style="position:absolute;top:391.00px;line-height:0;white-space:pre;font-size:6.90px;color:#a0afa2;will-change:transform;font-style:italic;left:504.70px;transform:scaleX(0.920);transform-origin:0 0;">Dialogue Tree Builder</div><div style="position:absolute;top:434.00px;line-height:0;white-space:pre;font-size:10.00px;color:#dcdcdc;will-change:transform;left:504.80px;">Option text</div><div style="position:absolute;left:559.60px;top:427.30px;width:54.00px;height:15.30px;background:#1f314b;border-radius:0px;"></div><div style="position:absolute;top:436.00px;line-height:0;white-space:pre;font-size:10.00px;color:#e6e6e6;will-change:transform;left:562.10px;">ERROR</div><div style="position:absolute;top:456.00px;line-height:0;white-space:pre;font-size:10.00px;color:#dcdcdc;will-change:transform;left:504.80px;">Condition</div><div style="position:absolute;left:809.80px;top:56.00px;width:231.00px;height:95.90px;border-radius:5px;background:rgba(18,18,18,0.94);overflow:hidden;box-shadow:0 0 0 0.8px rgba(0,0,0,0.3),0 0 3px rgba(0,0,0,0.3)"><div style="position:absolute;left:0;top:0;right:0;height:23.60px;background:#123d1c"></div></div><svg style="position:absolute;left:815.20px;top:60.10px;overflow:visible" width="10" height="11.4" viewBox="0 0 448 512"><path d="M210.6 5.9L62 169.4c-3.9 4.2-6 9.8-6 15.5C56 197.7 66.3 208 79.1 208H104L30.6 281.4c-4.2 4.2-6.6 10-6.6 16C24 309.9 34.1 320 46.6 320H80L5.4 409.5C1.9 413.7 0 419 0 424.5c0 13 10.5 23.5 23.5 23.5H192v32c0 17.7 14.3 32 32 32s32-14.3 32-32V448H424.5c13 0 23.5-10.5 23.5-23.5c0-5.5-1.9-10.8-5.4-15L368 320h33.4c12.5 0 22.6-10.1 22.6-22.6c0-6-2.4-11.8-6.6-16L344 208h24.9c12.7 0 23.1-10.3 23.1-23.1c0-5.7-2.1-11.3-6-15.5L237.4 5.9C234 2.1 229.1 0 224 0s-10 2.1-13.4 5.9z" fill="#ffffff"/></svg><div style="position:absolute;top:65.00px;line-height:0;white-space:pre;font-size:10.20px;color:#f0f0f0;will-change:transform;font-weight:bold;left:832.80px;transform:scaleX(0.920);transform-origin:0 0;">Dialogue Line</div><div style="position:absolute;top:73.00px;line-height:0;white-space:pre;font-size:6.90px;color:#a0afa2;will-change:transform;font-style:italic;left:832.80px;transform:scaleX(0.920);transform-origin:0 0;">Dialogue Tree Builder</div><div style="position:absolute;top:117.00px;line-height:0;white-space:pre;font-size:10.00px;color:#dcdcdc;will-change:transform;left:841.60px;">Speaker:</div><div style="position:absolute;left:886.90px;top:109.10px;width:61.00px;height:15.80px;background:#1f314b;border-radius:0px;"></div><div style="position:absolute;top:118.00px;line-height:0;white-space:pre;font-size:10.00px;color:#e6e6e6;will-change:transform;left:889.40px;">Player</div><div style="position:absolute;top:135.00px;line-height:0;white-space:pre;font-size:10.00px;color:#dcdcdc;will-change:transform;left:841.60px;">Line:</div><div style="position:absolute;left:868.30px;top:127.70px;width:161.70px;height:15.30px;background:#2a4d7c;border-radius:0px;"></div><div style="position:absolute;top:134.00px;line-height:0;white-space:pre;font-size:10.00px;color:#e6e6e6;will-change:transform;left:870.80px;">This option should always be here.</div><div style="position:absolute;left:780.70px;top:222.00px;width:260.10px;height:95.50px;border-radius:5px;background:rgba(18,18,18,0.94);overflow:hidden;box-shadow:0 0 0 0.8px rgba(0,0,0,0.3),0 0 3px rgba(0,0,0,0.3)"><div style="position:absolute;left:0;top:0;right:0;height:24.00px;background:#123d1c"></div></div><svg style="position:absolute;left:786.10px;top:226.10px;overflow:visible" width="10" height="11.4" viewBox="0 0 448 512"><path d="M210.6 5.9L62 169.4c-3.9 4.2-6 9.8-6 15.5C56 197.7 66.3 208 79.1 208H104L30.6 281.4c-4.2 4.2-6.6 10-6.6 16C24 309.9 34.1 320 46.6 320H80L5.4 409.5C1.9 413.7 0 419 0 424.5c0 13 10.5 23.5 23.5 23.5H192v32c0 17.7 14.3 32 32 32s32-14.3 32-32V448H424.5c13 0 23.5-10.5 23.5-23.5c0-5.5-1.9-10.8-5.4-15L368 320h33.4c12.5 0 22.6-10.1 22.6-22.6c0-6-2.4-11.8-6.6-16L344 208h24.9c12.7 0 23.1-10.3 23.1-23.1c0-5.7-2.1-11.3-6-15.5L237.4 5.9C234 2.1 229.1 0 224 0s-10 2.1-13.4 5.9z" fill="#ffffff"/></svg><div style="position:absolute;top:231.00px;line-height:0;white-space:pre;font-size:10.20px;color:#f0f0f0;will-change:transform;font-weight:bold;left:803.70px;transform:scaleX(0.920);transform-origin:0 0;">Dialogue Line</div><div style="position:absolute;top:239.00px;line-height:0;white-space:pre;font-size:6.90px;color:#a0afa2;will-change:transform;font-style:italic;left:803.70px;transform:scaleX(0.920);transform-origin:0 0;">Dialogue Tree Builder</div><div style="position:absolute;top:283.00px;line-height:0;white-space:pre;font-size:10.00px;color:#dcdcdc;will-change:transform;left:813.40px;">Speaker:</div><div style="position:absolute;left:858.00px;top:275.00px;width:61.00px;height:15.70px;background:#1f314b;border-radius:0px;"></div><div style="position:absolute;top:284.00px;line-height:0;white-space:pre;font-size:10.00px;color:#e6e6e6;will-change:transform;left:860.50px;">Player</div><div style="position:absolute;top:301.00px;line-height:0;white-space:pre;font-size:10.00px;color:#dcdcdc;will-change:transform;left:813.40px;">Line:</div><div style="position:absolute;left:840.00px;top:293.10px;width:190.00px;height:15.70px;background:#2a4d7c;border-radius:0px;"></div><div style="position:absolute;top:300.00px;line-height:0;white-space:pre;font-size:10.00px;color:#e6e6e6;will-change:transform;left:842.50px;">This option only if drunk.</div><div style="position:absolute;left:847.60px;top:389.50px;width:193.20px;height:95.40px;border-radius:5px;background:rgba(18,18,18,0.94);overflow:hidden;box-shadow:0 0 0 0.8px rgba(0,0,0,0.3),0 0 3px rgba(0,0,0,0.3)"><div style="position:absolute;left:0;top:0;right:0;height:24.50px;background:#123d1c"></div></div><svg style="position:absolute;left:853.00px;top:393.60px;overflow:visible" width="10" height="11.4" viewBox="0 0 448 512"><path d="M210.6 5.9L62 169.4c-3.9 4.2-6 9.8-6 15.5C56 197.7 66.3 208 79.1 208H104L30.6 281.4c-4.2 4.2-6.6 10-6.6 16C24 309.9 34.1 320 46.6 320H80L5.4 409.5C1.9 413.7 0 419 0 424.5c0 13 10.5 23.5 23.5 23.5H192v32c0 17.7 14.3 32 32 32s32-14.3 32-32V448H424.5c13 0 23.5-10.5 23.5-23.5c0-5.5-1.9-10.8-5.4-15L368 320h33.4c12.5 0 22.6-10.1 22.6-22.6c0-6-2.4-11.8-6.6-16L344 208h24.9c12.7 0 23.1-10.3 23.1-23.1c0-5.7-2.1-11.3-6-15.5L237.4 5.9C234 2.1 229.1 0 224 0s-10 2.1-13.4 5.9z" fill="#ffffff"/></svg><div style="position:absolute;top:399.00px;line-height:0;white-space:pre;font-size:10.20px;color:#f0f0f0;will-change:transform;font-weight:bold;left:870.60px;transform:scaleX(0.920);transform-origin:0 0;">Dialogue Line</div><div style="position:absolute;top:407.00px;line-height:0;white-space:pre;font-size:6.90px;color:#a0afa2;will-change:transform;font-style:italic;left:870.60px;transform:scaleX(0.920);transform-origin:0 0;">Dialogue Tree Builder</div><div style="position:absolute;top:450.00px;line-height:0;white-space:pre;font-size:10.00px;color:#dcdcdc;will-change:transform;left:879.60px;">Speaker:</div><div style="position:absolute;left:924.10px;top:443.40px;width:61.50px;height:14.90px;background:#1f314b;border-radius:0px;"></div><div style="position:absolute;top:452.00px;line-height:0;white-space:pre;font-size:10.00px;color:#e6e6e6;will-change:transform;left:926.60px;">Player</div><div style="position:absolute;top:469.00px;line-height:0;white-space:pre;font-size:10.00px;color:#dcdcdc;will-change:transform;left:879.60px;">Line:</div><div style="position:absolute;left:906.00px;top:461.50px;width:124.00px;height:14.90px;background:#2a4d7c;border-radius:0px;"></div><div style="position:absolute;top:468.00px;line-height:0;white-space:pre;font-size:10.00px;color:#e6e6e6;will-change:transform;left:908.50px;transform:scaleX(0.965);transform-origin:0 0;">This should never happen.</div><div style="position:absolute;left:9.50px;top:211.00px;width:373.80px;height:176.00px;border-radius:5px;background:rgba(18,18,18,0.94);overflow:hidden;box-shadow:0 0 0 0.8px rgba(0,0,0,0.3),0 0 3px rgba(0,0,0,0.3)"><div style="position:absolute;left:0;top:0;right:0;height:23.90px;background:#123d1c"></div></div><svg style="position:absolute;left:14.90px;top:215.10px;overflow:visible" width="10" height="11.4" viewBox="0 0 448 512"><path d="M210.6 5.9L62 169.4c-3.9 4.2-6 9.8-6 15.5C56 197.7 66.3 208 79.1 208H104L30.6 281.4c-4.2 4.2-6.6 10-6.6 16C24 309.9 34.1 320 46.6 320H80L5.4 409.5C1.9 413.7 0 419 0 424.5c0 13 10.5 23.5 23.5 23.5H192v32c0 17.7 14.3 32 32 32s32-14.3 32-32V448H424.5c13 0 23.5-10.5 23.5-23.5c0-5.5-1.9-10.8-5.4-15L368 320h33.4c12.5 0 22.6-10.1 22.6-22.6c0-6-2.4-11.8-6.6-16L344 208h24.9c12.7 0 23.1-10.3 23.1-23.1c0-5.7-2.1-11.3-6-15.5L237.4 5.9C234 2.1 229.1 0 224 0s-10 2.1-13.4 5.9z" fill="#ffffff"/></svg><div style="position:absolute;top:220.00px;line-height:0;white-space:pre;font-size:10.20px;color:#f0f0f0;will-change:transform;font-weight:bold;left:32.50px;transform:scaleX(0.920);transform-origin:0 0;">Dialogue Condition</div><div style="position:absolute;top:228.00px;line-height:0;white-space:pre;font-size:6.90px;color:#a0afa2;will-change:transform;font-style:italic;left:32.50px;transform:scaleX(0.920);transform-origin:0 0;">Dialogue Tree Builder</div><div style="position:absolute;top:250.00px;line-height:0;white-space:pre;font-size:10.00px;color:#dcdcdc;will-change:transform;right:666.60px;">Get condition</div><div style="position:absolute;top:250.00px;line-height:0;white-space:pre;font-size:10.00px;color:#dcdcdc;will-change:transform;left:32.50px;">Logic</div><div style="position:absolute;left:63.00px;top:243.10px;width:123.00px;height:15.80px;background:#1f314b;border-radius:0px;"></div><div style="position:absolute;left:186.00px;top:243.10px;width:15.70px;height:15.80px;background:#26486f;border-radius:0px;"></div><div style="position:absolute;top:252.00px;line-height:0;white-space:pre;font-size:10.00px;color:#e6e6e6;will-change:transform;left:65.50px;">NONE</div><div style="position:absolute;top:273.00px;line-height:0;white-space:pre;font-size:10.00px;color:#dcdcdc;will-change:transform;left:32.50px;">Comparison</div><div style="position:absolute;left:92.80px;top:265.80px;width:123.00px;height:16.10px;background:#1f314b;border-radius:0px;"></div><div style="position:absolute;left:215.80px;top:265.80px;width:15.60px;height:16.10px;background:#26486f;border-radius:0px;"></div><div style="position:absolute;top:275.00px;line-height:0;white-space:pre;font-size:10.00px;color:#e6e6e6;will-change:transform;left:95.30px;">==</div><div style="position:absolute;top:296.00px;line-height:0;white-space:pre;font-size:10.00px;color:#dcdcdc;will-change:transform;left:32.50px;">Left</div><div style="position:absolute;left:56.20px;top:288.70px;width:122.80px;height:16.10px;background:#1f314b;border-radius:0px;"></div><div style="position:absolute;left:179.00px;top:288.70px;width:15.60px;height:16.10px;background:#26486f;border-radius:0px;"></div><div style="position:absolute;top:298.00px;line-height:0;white-space:pre;font-size:10.00px;color:#e6e6e6;will-change:transform;left:58.70px;">Blackboard Key</div><div style="position:absolute;left:55.70px;top:306.90px;width:96.20px;height:15.90px;background:#1f314b;border-radius:0px;"></div><div style="position:absolute;top:316.00px;line-height:0;white-space:pre;font-size:10.00px;color:#e6e6e6;will-change:transform;left:58.20px;">PlayerState</div><div style="position:absolute;top:337.00px;line-height:0;white-space:pre;font-size:10.00px;color:#dcdcdc;will-change:transform;left:32.50px;">Right</div><div style="position:absolute;left:61.80px;top:329.60px;width:123.00px;height:16.20px;background:#1f314b;border-radius:0px;"></div><div style="position:absolute;left:184.80px;top:329.60px;width:15.40px;height:16.20px;background:#26486f;border-radius:0px;"></div><div style="position:absolute;top:339.00px;line-height:0;white-space:pre;font-size:10.00px;color:#e6e6e6;will-change:transform;left:64.30px;">Int</div><div style="position:absolute;left:61.00px;top:347.70px;width:101.80px;height:16.40px;background:#1f314b;border-radius:0px;"></div><div style="position:absolute;top:357.00px;line-height:0;white-space:pre;font-size:10.00px;color:#e6e6e6;will-change:transform;left:63.50px;">2</div><div style="position:absolute;left:166.00px;top:347.70px;width:15.40px;height:16.40px;background:#26486f;border-radius:0px;"></div><div style="position:absolute;top:356.00px;line-height:0;white-space:pre;font-size:9.00px;color:#e6e6e6;will-change:transform;left:173.70px;transform:translateX(-50%);">-</div><div style="position:absolute;left:184.00px;top:347.70px;width:15.70px;height:16.40px;background:#26486f;border-radius:0px;"></div><div style="position:absolute;top:356.00px;line-height:0;white-space:pre;font-size:10.50px;color:#e6e6e6;will-change:transform;left:191.85px;transform:translateX(-50%);">+</div><div style="position:absolute;top:376.00px;line-height:0;white-space:pre;font-size:10.00px;color:#dcdcdc;will-change:transform;left:14.60px;">+ Add Pin</div><div style="position:absolute;left:9.50px;top:398.60px;width:373.80px;height:202.20px;border-radius:5px;background:rgba(18,18,18,0.94);overflow:hidden;box-shadow:0 0 0 0.8px rgba(0,0,0,0.3),0 0 3px rgba(0,0,0,0.3)"><div style="position:absolute;left:0;top:0;right:0;height:23.80px;background:#123d1c"></div></div><svg style="position:absolute;left:14.90px;top:402.70px;overflow:visible" width="10" height="11.4" viewBox="0 0 448 512"><path d="M210.6 5.9L62 169.4c-3.9 4.2-6 9.8-6 15.5C56 197.7 66.3 208 79.1 208H104L30.6 281.4c-4.2 4.2-6.6 10-6.6 16C24 309.9 34.1 320 46.6 320H80L5.4 409.5C1.9 413.7 0 419 0 424.5c0 13 10.5 23.5 23.5 23.5H192v32c0 17.7 14.3 32 32 32s32-14.3 32-32V448H424.5c13 0 23.5-10.5 23.5-23.5c0-5.5-1.9-10.8-5.4-15L368 320h33.4c12.5 0 22.6-10.1 22.6-22.6c0-6-2.4-11.8-6.6-16L344 208h24.9c12.7 0 23.1-10.3 23.1-23.1c0-5.7-2.1-11.3-6-15.5L237.4 5.9C234 2.1 229.1 0 224 0s-10 2.1-13.4 5.9z" fill="#ffffff"/></svg><div style="position:absolute;top:408.00px;line-height:0;white-space:pre;font-size:10.20px;color:#f0f0f0;will-change:transform;font-weight:bold;left:32.50px;transform:scaleX(0.920);transform-origin:0 0;">Dialogue Condition</div><div style="position:absolute;top:416.00px;line-height:0;white-space:pre;font-size:6.90px;color:#a0afa2;will-change:transform;font-style:italic;left:32.50px;transform:scaleX(0.920);transform-origin:0 0;">Dialogue Tree Builder</div><div style="position:absolute;top:438.00px;line-height:0;white-space:pre;font-size:10.00px;color:#dcdcdc;will-change:transform;right:666.60px;">Get condition</div><div style="position:absolute;top:439.00px;line-height:0;white-space:pre;font-size:10.00px;color:#dcdcdc;will-change:transform;left:32.50px;">Logic</div><div style="position:absolute;left:63.70px;top:431.40px;width:122.80px;height:15.70px;background:#1f314b;border-radius:0px;"></div><div style="position:absolute;left:186.50px;top:431.40px;width:15.50px;height:15.70px;background:#26486f;border-radius:0px;"></div><div style="position:absolute;top:440.00px;line-height:0;white-space:pre;font-size:10.00px;color:#e6e6e6;will-change:transform;left:66.20px;">And</div><div style="position:absolute;top:461.00px;line-height:0;white-space:pre;font-size:10.00px;color:#dcdcdc;will-change:transform;left:32.50px;">Comparison</div><div style="position:absolute;left:93.75px;top:454.10px;width:122.55px;height:15.70px;background:#1f314b;border-radius:0px;"></div><div style="position:absolute;left:216.30px;top:454.10px;width:15.70px;height:15.70px;background:#26486f;border-radius:0px;"></div><div style="position:absolute;top:463.00px;line-height:0;white-space:pre;font-size:10.00px;color:#e6e6e6;will-change:transform;left:96.25px;">NONE</div><div style="position:absolute;top:484.00px;line-height:0;white-space:pre;font-size:10.00px;color:#dcdcdc;will-change:transform;left:32.50px;">Left</div><div style="position:absolute;left:56.60px;top:476.60px;width:122.20px;height:16.20px;background:#1f314b;border-radius:0px;"></div><div style="position:absolute;left:178.80px;top:476.60px;width:15.70px;height:16.20px;background:#26486f;border-radius:0px;"></div><div style="position:absolute;top:486.00px;line-height:0;white-space:pre;font-size:10.00px;color:#e6e6e6;will-change:transform;left:59.10px;">Int</div><div style="position:absolute;left:56.60px;top:495.10px;width:101.20px;height:15.70px;background:#1f314b;border-radius:0px;"></div><div style="position:absolute;top:504.00px;line-height:0;white-space:pre;font-size:10.00px;color:#e6e6e6;will-change:transform;left:59.10px;">0</div><div style="position:absolute;left:160.50px;top:495.10px;width:15.70px;height:15.70px;background:#26486f;border-radius:0px;"></div><div style="position:absolute;top:503.00px;line-height:0;white-space:pre;font-size:9.00px;color:#e6e6e6;will-change:transform;left:168.35px;transform:translateX(-50%);">-</div><div style="position:absolute;left:178.90px;top:495.10px;width:15.60px;height:15.70px;background:#26486f;border-radius:0px;"></div><div style="position:absolute;top:503.00px;line-height:0;white-space:pre;font-size:10.50px;color:#e6e6e6;will-change:transform;left:186.70px;transform:translateX(-50%);">+</div><div style="position:absolute;top:525.00px;line-height:0;white-space:pre;font-size:10.00px;color:#dcdcdc;will-change:transform;left:32.50px;">Right</div><div style="position:absolute;left:62.50px;top:517.60px;width:122.50px;height:15.90px;background:#1f314b;border-radius:0px;"></div><div style="position:absolute;left:185.00px;top:517.60px;width:15.80px;height:15.90px;background:#26486f;border-radius:0px;"></div><div style="position:absolute;top:527.00px;line-height:0;white-space:pre;font-size:10.00px;color:#e6e6e6;will-change:transform;left:65.00px;">Int</div><div style="position:absolute;left:62.50px;top:536.10px;width:101.50px;height:15.70px;background:#1f314b;border-radius:0px;"></div><div style="position:absolute;top:545.00px;line-height:0;white-space:pre;font-size:10.00px;color:#e6e6e6;will-change:transform;left:65.00px;">0</div><div style="position:absolute;left:166.80px;top:536.10px;width:15.60px;height:15.70px;background:#26486f;border-radius:0px;"></div><div style="position:absolute;top:544.00px;line-height:0;white-space:pre;font-size:9.00px;color:#e6e6e6;will-change:transform;left:174.60px;transform:translateX(-50%);">-</div><div style="position:absolute;left:185.00px;top:536.10px;width:15.80px;height:15.70px;background:#26486f;border-radius:0px;"></div><div style="position:absolute;top:544.00px;line-height:0;white-space:pre;font-size:10.50px;color:#e6e6e6;will-change:transform;left:192.90px;transform:translateX(-50%);">+</div><div style="position:absolute;top:566.00px;line-height:0;white-space:pre;font-size:10.00px;color:#dcdcdc;will-change:transform;left:33.20px;">Child 0</div>
<svg style="left:0;top:0" width="1024" height="576"><path d="M110.80 81.00 L115.55 81.00 L119.60 86.00 L115.55 91.00 L110.80 91.00 Z" fill="#ffffff" stroke="#ffffff" stroke-width="0.3" stroke-linejoin="round"/><line x1="120.00" y1="86.00" x2="127.00" y2="86.00" stroke="#4a4a4a" stroke-width="1.3"/><circle cx="115.00" cy="107.00" r="3.40" fill="none" stroke="#2fd47a" stroke-width="1.6"/><path d="M120.20 104.90 L122.60 107.00 L120.20 109.10 Z" fill="#2fd47a"/><path d="M230.50 77.00 L235.25 77.00 L239.30 82.00 L235.25 87.00 L230.50 87.00 Z" fill="#ffffff" stroke="#ffffff" stroke-width="0.3" stroke-linejoin="round"/><line x1="223.60" y1="82.00" x2="231.00" y2="82.00" stroke="#4a4a4a" stroke-width="1.3"/><path d="M376.10 77.00 L380.85 77.00 L384.90 82.00 L380.85 87.00 L376.10 87.00 Z" fill="#ffffff" stroke="#ffffff" stroke-width="0.3" stroke-linejoin="round"/><line x1="385.00" y1="82.00" x2="392.00" y2="82.00" stroke="#4a4a4a" stroke-width="1.3"/><path d="M376.10 98.20 L380.85 98.20 L384.90 103.20 L380.85 108.20 L376.10 108.20 Z" fill="#ffffff" stroke="#ffffff" stroke-width="0.3" stroke-linejoin="round"/><line x1="385.00" y1="103.20" x2="392.00" y2="103.20" stroke="#4a4a4a" stroke-width="1.3"/><path d="M376.10 118.80 L380.85 118.80 L384.90 123.80 L380.85 128.80 L376.10 128.80 Z" fill="#ffffff" stroke="#ffffff" stroke-width="0.3" stroke-linejoin="round"/><line x1="385.00" y1="123.80" x2="392.00" y2="123.80" stroke="#4a4a4a" stroke-width="1.3"/><path d="M480.00 86.50 L484.75 86.50 L488.80 91.50 L484.75 96.50 L480.00 96.50 Z" fill="#ffffff" stroke="#ffffff" stroke-width="0.3" stroke-linejoin="round"/><line x1="472.60" y1="91.50" x2="481.00" y2="91.50" stroke="#4a4a4a" stroke-width="1.3"/><path d="M765.40 86.50 L770.15 86.50 L774.20 91.50 L770.15 96.50 L765.40 96.50 Z" fill="#ffffff" stroke="#ffffff" stroke-width="0.3" stroke-linejoin="round"/><line x1="773.90" y1="91.50" x2="781.40" y2="91.50" stroke="#4a4a4a" stroke-width="1.3"/><circle cx="484.20" cy="113.00" r="3.40" fill="none" stroke="#e627d6" stroke-width="1.6"/><path d="M489.40 110.90 L491.80 113.00 L489.40 115.10 Z" fill="#e627d6"/><circle cx="484.20" cy="135.70" r="3.40" fill="none" stroke="#c8c47a" stroke-width="1.6"/><path d="M489.40 133.60 L491.80 135.70 L489.40 137.80 Z" fill="#c8c47a"/><path d="M466.40 263.70 L471.15 263.70 L475.20 268.70 L471.15 273.70 L466.40 273.70 Z" fill="#ffffff" stroke="#ffffff" stroke-width="0.3" stroke-linejoin="round"/><line x1="459.70" y1="268.70" x2="467.40" y2="268.70" stroke="#4a4a4a" stroke-width="1.3"/><path d="M703.00 263.70 L707.75 263.70 L711.80 268.70 L707.75 273.70 L703.00 273.70 Z" fill="#ffffff" stroke="#ffffff" stroke-width="0.3" stroke-linejoin="round"/><line x1="711.50" y1="268.70" x2="718.20" y2="268.70" stroke="#4a4a4a" stroke-width="1.3"/><circle cx="470.60" cy="289.70" r="3.40" fill="none" stroke="#e627d6" stroke-width="1.6"/><path d="M475.80 287.60 L478.20 289.70 L475.80 291.80 Z" fill="#e627d6"/><circle cx="470.60" cy="312.40" r="4.20" fill="#c8c47a"/><path d="M475.80 310.30 L478.20 312.40 L475.80 314.50 Z" fill="#c8c47a"/><line x1="459.70" y1="312.40" x2="467.40" y2="312.40" stroke="#55543a" stroke-width="1.3"/><path d="M490.80 406.90 L495.55 406.90 L499.60 411.90 L495.55 416.90 L490.80 416.90 Z" fill="#ffffff" stroke="#ffffff" stroke-width="0.3" stroke-linejoin="round"/><line x1="483.70" y1="411.90" x2="491.80" y2="411.90" stroke="#4a4a4a" stroke-width="1.3"/><path d="M691.00 406.90 L695.75 406.90 L699.80 411.90 L695.75 416.90 L691.00 416.90 Z" fill="#ffffff" stroke="#ffffff" stroke-width="0.3" stroke-linejoin="round"/><line x1="699.50" y1="411.90" x2="706.50" y2="411.90" stroke="#4a4a4a" stroke-width="1.3"/><circle cx="495.00" cy="432.80" r="3.40" fill="none" stroke="#e627d6" stroke-width="1.6"/><path d="M500.20 430.70 L502.60 432.80 L500.20 434.90 Z" fill="#e627d6"/><circle cx="495.00" cy="455.40" r="4.20" fill="#c8c47a"/><path d="M500.20 453.30 L502.60 455.40 L500.20 457.50 Z" fill="#c8c47a"/><line x1="483.70" y1="455.40" x2="491.80" y2="455.40" stroke="#55543a" stroke-width="1.3"/><path d="M818.60 89.20 L823.35 89.20 L827.40 94.20 L823.35 99.20 L818.60 99.20 Z" fill="#ffffff" stroke="#ffffff" stroke-width="0.3" stroke-linejoin="round"/><line x1="811.80" y1="94.20" x2="819.60" y2="94.20" stroke="#4a4a4a" stroke-width="1.3"/><circle cx="822.80" cy="115.40" r="3.40" fill="none" stroke="#b87fdc" stroke-width="1.6"/><path d="M828.00 113.30 L830.40 115.40 L828.00 117.50 Z" fill="#b87fdc"/><path d="M789.80 255.10 L794.55 255.10 L798.60 260.10 L794.55 265.10 L789.80 265.10 Z" fill="#ffffff" stroke="#ffffff" stroke-width="0.3" stroke-linejoin="round"/><line x1="782.70" y1="260.10" x2="790.80" y2="260.10" stroke="#4a4a4a" stroke-width="1.3"/><circle cx="794.00" cy="281.50" r="3.40" fill="none" stroke="#b87fdc" stroke-width="1.6"/><path d="M799.20 279.40 L801.60 281.50 L799.20 283.60 Z" fill="#b87fdc"/><path d="M856.20 423.10 L860.95 423.10 L865.00 428.10 L860.95 433.10 L856.20 433.10 Z" fill="#ffffff" stroke="#ffffff" stroke-width="0.3" stroke-linejoin="round"/><line x1="849.60" y1="428.10" x2="857.20" y2="428.10" stroke="#4a4a4a" stroke-width="1.3"/><circle cx="860.40" cy="449.10" r="3.40" fill="none" stroke="#b87fdc" stroke-width="1.6"/><path d="M865.60 447.00 L868.00 449.10 L865.60 451.20 Z" fill="#b87fdc"/><circle cx="369.40" cy="248.80" r="4.20" fill="#c8c47a"/><path d="M374.60 246.70 L377.00 248.80 L374.60 250.90 Z" fill="#c8c47a"/><line x1="375.00" y1="248.80" x2="380.50" y2="248.80" stroke="#55543a" stroke-width="1.3"/><circle cx="22.90" cy="249.10" r="3.40" fill="none" stroke="#8cc07c" stroke-width="1.6"/><path d="M28.10 247.00 L30.50 249.10 L28.10 251.20 Z" fill="#8cc07c"/><path d="M189.65 247.60 L198.05 247.60 L193.85 254.80 Z" fill="#ffffff"/><circle cx="22.90" cy="271.90" r="3.40" fill="none" stroke="#8cc07c" stroke-width="1.6"/><path d="M28.10 269.80 L30.50 271.90 L28.10 274.00 Z" fill="#8cc07c"/><path d="M219.40 270.45 L227.80 270.45 L223.60 277.65 Z" fill="#ffffff"/><circle cx="22.90" cy="294.30" r="3.40" fill="none" stroke="#8383ea" stroke-width="1.6"/><path d="M28.10 292.20 L30.50 294.30 L28.10 296.40 Z" fill="#8383ea"/><path d="M182.60 293.35 L191.00 293.35 L186.80 300.55 Z" fill="#ffffff"/><circle cx="22.90" cy="335.70" r="3.40" fill="none" stroke="#8383ea" stroke-width="1.6"/><path d="M28.10 333.60 L30.50 335.70 L28.10 337.80 Z" fill="#8383ea"/><path d="M188.30 334.30 L196.70 334.30 L192.50 341.50 Z" fill="#ffffff"/><circle cx="369.40" cy="437.00" r="4.20" fill="#c8c47a"/><path d="M374.60 434.90 L377.00 437.00 L374.60 439.10 Z" fill="#c8c47a"/><line x1="375.00" y1="437.00" x2="380.50" y2="437.00" stroke="#55543a" stroke-width="1.3"/><circle cx="22.90" cy="437.90" r="3.40" fill="none" stroke="#8cc07c" stroke-width="1.6"/><path d="M28.10 435.80 L30.50 437.90 L28.10 440.00 Z" fill="#8cc07c"/><path d="M190.05 435.85 L198.45 435.85 L194.25 443.05 Z" fill="#ffffff"/><circle cx="22.90" cy="460.10" r="3.40" fill="none" stroke="#8cc07c" stroke-width="1.6"/><path d="M28.10 458.00 L30.50 460.10 L28.10 462.20 Z" fill="#8cc07c"/><path d="M219.95 458.55 L228.35 458.55 L224.15 465.75 Z" fill="#ffffff"/><circle cx="22.90" cy="482.85" r="3.40" fill="none" stroke="#8383ea" stroke-width="1.6"/><path d="M28.10 480.75 L30.50 482.85 L28.10 484.95 Z" fill="#8383ea"/><path d="M182.45 481.30 L190.85 481.30 L186.65 488.50 Z" fill="#ffffff"/><circle cx="22.90" cy="523.90" r="3.40" fill="none" stroke="#8383ea" stroke-width="1.6"/><path d="M28.10 521.80 L30.50 523.90 L28.10 526.00 Z" fill="#8383ea"/><path d="M188.70 522.15 L197.10 522.15 L192.90 529.35 Z" fill="#ffffff"/><circle cx="22.95" cy="565.00" r="4.20" fill="#c8c47a"/><path d="M28.15 562.90 L30.55 565.00 L28.15 567.10 Z" fill="#c8c47a"/><line x1="11.50" y1="565.00" x2="19.00" y2="565.00" stroke="#55543a" stroke-width="1.3"/></svg>
<div style="position:absolute;top:547.00px;line-height:0;white-space:pre;font-size:35.00px;color:#464646;will-change:transform;font-weight:bold;left:825.50px;transform:scaleX(0.930);transform-origin:0 0;">ScriptGraph</div>
</body></html>
